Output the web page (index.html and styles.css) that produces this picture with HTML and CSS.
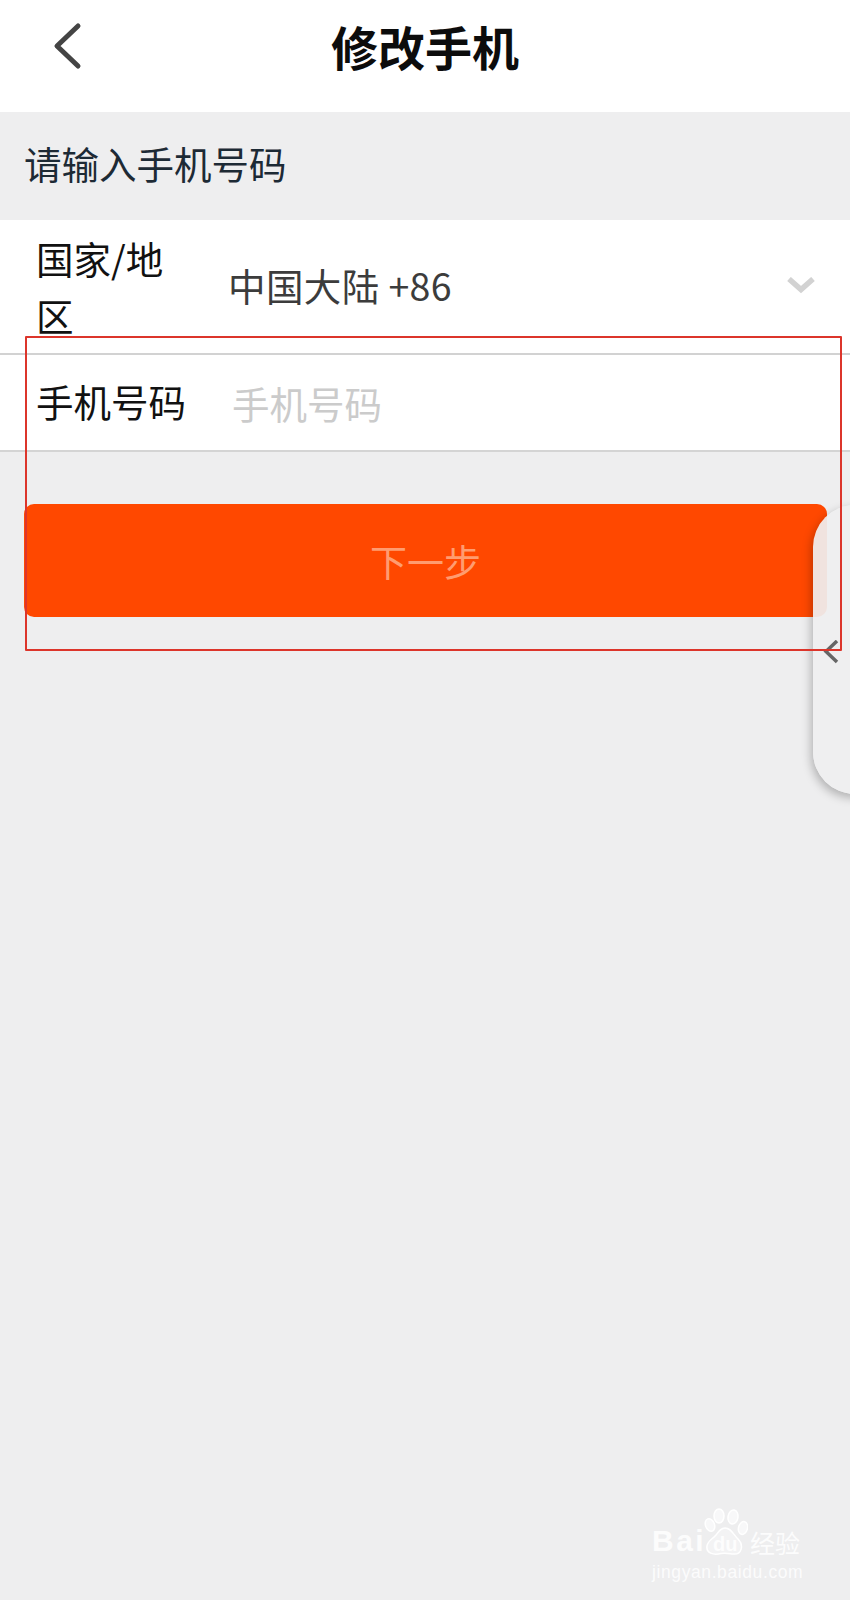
FILE: index.html
```html
<!DOCTYPE html>
<html lang="zh-CN">
<head>
<meta charset="utf-8">
<title>修改手机</title>
<link rel="stylesheet" href="styles.css">
</head>
<body>
<div class="page">
  <header class="topbar">
    <svg class="back" viewBox="0 0 30 48" width="30" height="48"><path d="M26 4 L5 24 L26 44" fill="none" stroke="#444" stroke-width="5" stroke-linecap="round" stroke-linejoin="round"/></svg>
    <h1 class="title">修改手机</h1>
  </header>
  <div class="hint">请输入手机号码</div>
  <section class="form">
    <div class="row row-region">
      <div class="label">国家/地区</div>
      <div class="value">中国大陆 +86</div>
      <svg class="chev" viewBox="0 0 28 18" width="28" height="18"><path d="M2 2 L14 12.500 L26 2" fill="none" stroke="#d2d2d2" stroke-width="5.500"/></svg>
    </div>
    <div class="row row-phone">
      <div class="label">手机号码</div>
      <div class="placeholder">手机号码</div>
    </div>
  </section>
  <div class="btn-wrap"><button class="next">下一步</button></div>

  <aside class="side">
    <svg class="side-arrow" viewBox="0 0 16 24" width="16" height="24"><path d="M14 1 L3 11.500 L14 22" fill="none" stroke="#666" stroke-width="3.500"/></svg>
  </aside>
  <div class="mark"></div>

  <div class="watermark">
    <div class="wm-top">
      <span class="wm-bai">Bai</span>
      <svg class="wm-paw" viewBox="0 0 45 47" width="45" height="47">
        <g fill="#fff" fill-opacity=".6" stroke="#fff" stroke-width="1.500">
          <ellipse cx="7" cy="17" rx="4.500" ry="6.500" transform="rotate(-20 7 17)"/>
          <ellipse cx="16" cy="8" rx="5" ry="7"/>
          <ellipse cx="30" cy="9" rx="5" ry="7" transform="rotate(10 30 9)"/>
          <ellipse cx="40" cy="20" rx="4.500" ry="6.500" transform="rotate(15 40 20)"/>
          <path d="M22 20 C28 20 30 26 35 31 C41 37 39 47 30 46 C26 45.500 22 44.500 18 45.500 C10 47.500 3 45 4 38 C5 32 10 31 13 27 C16 23 18 20 22 20 Z" fill-opacity=".3"/>
        </g>
      </svg>
      <span class="wm-du">du</span>
      <span class="wm-cn">经验</span>
    </div>
    <div class="wm-url">jingyan.baidu.com</div>
  </div>
</div>
</body>
</html>
```
FILE: styles.css
```css
* { box-sizing: border-box; }
html, body { margin: 0; padding: 0; }
body {
  width: 850px;
  height: 1600px;
  background: #eeeeef;
  font-family: "Noto Sans CJK SC", "Noto Sans", sans-serif;
  overflow: hidden;
}
.page { position: relative; width: 850px; height: 1600px; }

.topbar {
  height: 112px;
  background: #fff;
  display: flex;
  align-items: center;
  justify-content: center;
  position: relative;
}
.back { position: absolute; left: 52px; top: 22px; }
.title {
  margin: 0 0 20px;
  font-size: 47px;
  line-height: 60px;
  font-weight: 700;
  color: #0c0c0c;
}
.hint {
  height: 108px;
  padding: 0 0 8px 24px;
  display: flex;
  align-items: center;
  font-size: 37.500px;
  color: #1d2a35;
}
.form { background: #fff; }
.row { display: flex; align-items: center; padding-left: 36px; }
.row-region {
  height: 135px;
  border-bottom: 2px solid #d2d2d2;
  position: relative;
}
.row-phone {
  height: 97px;
  border-bottom: 2px solid #d4d4d4;
}
.label {
  width: 150px;
  font-size: 37.500px;
  line-height: 57px;
  color: #111;
}
.row-region .label { margin-top: -2px; }
.row-phone .label { margin-top: -4px; }
.value {
  margin-left: 42px;
  font-size: 37.500px;
  line-height: 58px;
  letter-spacing: 0.400px;
  color: #3c3c3c;
  margin-top: -3px;
}
.chev { position: absolute; left: 787px; top: 57px; }
.placeholder {
  margin-left: 46px;
  font-size: 37.500px;
  line-height: 58px;
  color: #cbcbcb;
}
.btn-wrap { padding: 52px 23px 0 24px; }
.next {
  display: block;
  width: 100%;
  height: 113px;
  border: 0;
  border-radius: 10px;
  background: #ff4800;
  color: #ff9c70;
  font-family: inherit;
  font-size: 37px;
  padding: 0;
}
.side {
  position: absolute;
  left: 813px;
  top: 505px;
  width: 60px;
  height: 289px;
  border-radius: 42px 0 0 42px;
  background: rgba(239, 239, 240, 0.93);
  box-shadow: -2px 4px 10px rgba(0, 0, 0, 0.25);
}
.side-arrow { position: absolute; left: 10px; top: 135px; }
.mark {
  position: absolute;
  left: 25px;
  top: 336px;
  width: 817px;
  height: 315px;
  border: 2px solid #dc352b;
  border-radius: 1px;
}
.watermark {
  position: absolute;
  left: 652px;
  top: 1508px;
  width: 151px;
  color: rgba(255, 255, 255, 0.85);
}
.wm-top { display: flex; align-items: flex-end; height: 47px; position: relative; }
.wm-bai {
  flex: none;
  width: 51px;
  font-family: "Liberation Sans", sans-serif;
  font-weight: 700;
  font-size: 30px;
  line-height: 28px;
  letter-spacing: 2.500px;
}
.wm-paw { flex: none; }
.wm-du {
  position: absolute;
  left: 61px;
  top: 25px;
  font-family: "Liberation Sans", sans-serif;
  font-weight: 700;
  font-size: 20px;
  line-height: 22px;
}
.wm-cn { font-size: 25px; line-height: 25px; margin-left: 2px; white-space: nowrap; }
.wm-url {
  font-family: "Liberation Sans", sans-serif;
  font-size: 17.500px;
  line-height: 20px;
  margin-top: 7px;
  letter-spacing: 0.600px;
  white-space: nowrap;
}
```
